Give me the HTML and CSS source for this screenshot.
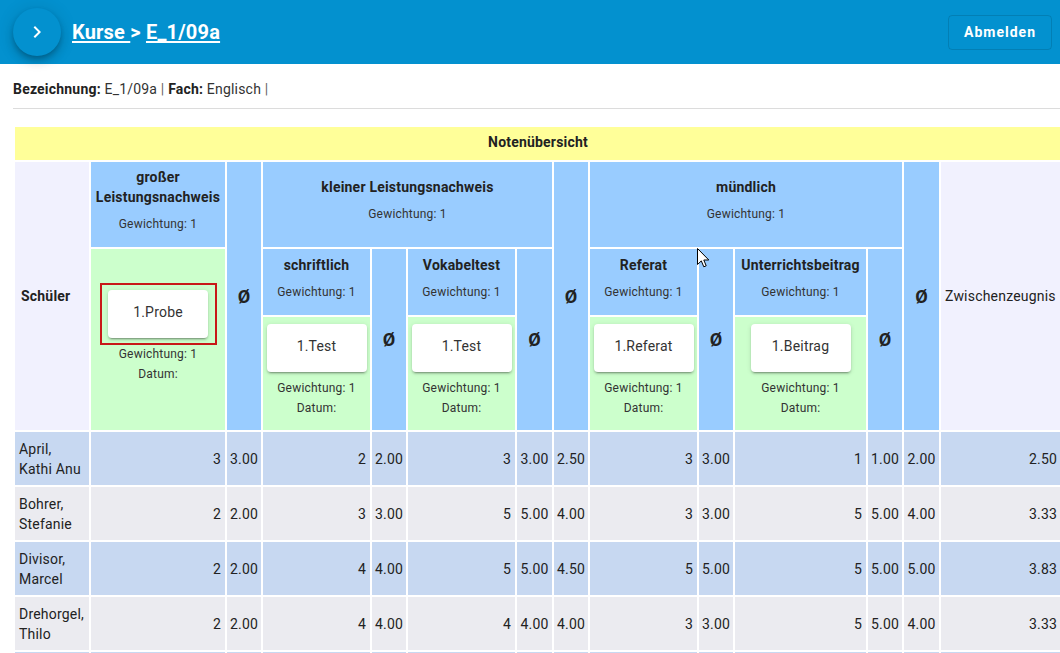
FILE: index.html
```html
<!DOCTYPE html>
<html lang="de">
<head>
<meta charset="utf-8">
<title>Kurse &gt; E_1/09a</title>
<link rel="stylesheet" href="styles.css">
</head>
<body>
<header class="topbar">
  <button class="fab" type="button" aria-label="Menü">
    <svg viewBox="0 0 24 24" width="24" height="24"><path d="M10 6L8.59 7.41 13.17 12l-4.58 4.59L10 18l6-6z" fill="#fff"/></svg>
  </button>
  <h1 class="crumbs"><a href="#" class="crumb">Kurse </a>&gt; <a href="#" class="crumb">E_1/09a</a></h1>
  <button class="logout" type="button">Abmelden</button>
</header>
<main class="content">
  <div class="info"><b>Bezeichnung:</b> E_1/09a <span class="sep">|</span> <b>Fach:</b> Englisch <span class="sep">|</span></div>
  <hr class="rule">
  <table class="grades">
    <colgroup>
      <col class="w-name"><col class="w-big"><col class="w-avg"><col class="w-sub"><col class="w-avg"><col class="w-sub"><col class="w-avg35"><col class="w-avg"><col class="w-sub"><col class="w-avg"><col class="w-wide"><col class="w-avg"><col class="w-avg35"><col class="w-final">
    </colgroup>
    <thead>
      <tr class="r-title"><th colspan="14" class="c-title">Notenübersicht</th></tr>
      <tr class="r-cat">
        <th rowspan="3" class="c-student">Schüler</th>
        <th class="c-cat"><div class="title">großer Leistungsnachweis</div><div class="weight">Gewichtung: 1</div></th>
        <th rowspan="3" class="c-avg">Ø</th>
        <th colspan="4" class="c-cat"><div class="title">kleiner Leistungsnachweis</div><div class="weight">Gewichtung: 1</div></th>
        <th rowspan="3" class="c-avg">Ø</th>
        <th colspan="4" class="c-cat"><div class="title">mündlich</div><div class="weight">Gewichtung: 1</div></th>
        <th rowspan="3" class="c-avg">Ø</th>
        <th rowspan="3" class="c-final">Zwischenzeugnis</th>
      </tr>
      <tr class="r-sub">
        <th rowspan="2" class="c-exam">
          <div class="card">1.Probe<span class="mark"></span></div>
          <div class="meta">Gewichtung: 1</div>
          <div class="meta">Datum:</div>
        </th>
        <th class="c-cat"><div class="title">schriftlich</div><div class="weight">Gewichtung: 1</div></th>
        <th rowspan="2" class="c-avg">Ø</th>
        <th class="c-cat"><div class="title">Vokabeltest</div><div class="weight">Gewichtung: 1</div></th>
        <th rowspan="2" class="c-avg">Ø</th>
        <th class="c-cat"><div class="title">Referat</div><div class="weight">Gewichtung: 1</div></th>
        <th rowspan="2" class="c-avg">Ø</th>
        <th class="c-cat"><div class="title">Unterrichtsbeitrag</div><div class="weight">Gewichtung: 1</div></th>
        <th rowspan="2" class="c-avg">Ø</th>
      </tr>
      <tr class="r-exam">
        <th class="c-exam"><div class="card">1.Test</div><div class="meta">Gewichtung: 1</div><div class="meta">Datum:</div></th>
        <th class="c-exam"><div class="card">1.Test</div><div class="meta">Gewichtung: 1</div><div class="meta">Datum:</div></th>
        <th class="c-exam"><div class="card">1.Referat</div><div class="meta">Gewichtung: 1</div><div class="meta">Datum:</div></th>
        <th class="c-exam"><div class="card">1.Beitrag</div><div class="meta">Gewichtung: 1</div><div class="meta">Datum:</div></th>
      </tr>
    </thead>
    <tbody>
      <tr class="row odd">
        <td class="name">April, Kathi Anu</td>
        <td class="num">3</td><td class="avg">3.00</td>
        <td class="num">2</td><td class="avg">2.00</td>
        <td class="num">3</td><td class="avg">3.00</td><td class="avg">2.50</td>
        <td class="num">3</td><td class="avg">3.00</td>
        <td class="num">1</td><td class="avg">1.00</td><td class="avg">2.00</td>
        <td class="num">2.50</td>
      </tr>
      <tr class="row even">
        <td class="name">Bohrer, Stefanie</td>
        <td class="num">2</td><td class="avg">2.00</td>
        <td class="num">3</td><td class="avg">3.00</td>
        <td class="num">5</td><td class="avg">5.00</td><td class="avg">4.00</td>
        <td class="num">3</td><td class="avg">3.00</td>
        <td class="num">5</td><td class="avg">5.00</td><td class="avg">4.00</td>
        <td class="num">3.33</td>
      </tr>
      <tr class="row odd">
        <td class="name">Divisor, Marcel</td>
        <td class="num">2</td><td class="avg">2.00</td>
        <td class="num">4</td><td class="avg">4.00</td>
        <td class="num">5</td><td class="avg">5.00</td><td class="avg">4.50</td>
        <td class="num">5</td><td class="avg">5.00</td>
        <td class="num">5</td><td class="avg">5.00</td><td class="avg">5.00</td>
        <td class="num">3.83</td>
      </tr>
      <tr class="row even">
        <td class="name">Drehorgel, Thilo</td>
        <td class="num">2</td><td class="avg">2.00</td>
        <td class="num">4</td><td class="avg">4.00</td>
        <td class="num">4</td><td class="avg">4.00</td><td class="avg">4.00</td>
        <td class="num">3</td><td class="avg">3.00</td>
        <td class="num">5</td><td class="avg">5.00</td><td class="avg">4.00</td>
        <td class="num">3.33</td>
      </tr>
      <tr class="row odd">
        <td class="name"></td>
        <td class="num"></td><td class="avg"></td>
        <td class="num"></td><td class="avg"></td>
        <td class="num"></td><td class="avg"></td><td class="avg"></td>
        <td class="num"></td><td class="avg"></td>
        <td class="num"></td><td class="avg"></td><td class="avg"></td>
        <td class="num"></td>
      </tr>
    </tbody>
  </table>
</main>
<svg class="cursor" width="13" height="21" viewBox="0 0 13 21" aria-hidden="true">
  <path d="M0.5 0.5 L0.5 16.5 L4.3 12.9 L6.8 18.8 L9.2 17.8 L6.8 12 L11.8 12 Z" fill="#fff" stroke="#000" stroke-width="1" stroke-linejoin="miter"/>
</svg>
</body>
</html>
```

FILE: styles.css
```css
html, body {
  margin: 0;
  padding: 0;
  overflow: hidden;
}
body {
  position: relative;
  width: 1060px;
  height: 653px;
  font-family: Roboto, "Liberation Sans", Arial, sans-serif;
  font-size: 14px;
  letter-spacing: 0.2px;
  color: #222;
  background: #fff;
}

/* top bar */
.topbar {
  height: 64px;
  background: #0391cf;
  display: flex;
  align-items: center;
  padding: 0 8px 0 13px;
  box-sizing: border-box;
}
.fab {
  width: 48px;
  height: 48px;
  border-radius: 50%;
  border: none;
  padding: 0;
  background: #0391cf;
  display: flex;
  align-items: center;
  justify-content: center;
  box-shadow: 0 3px 5px -1px rgba(0,0,0,.2), 0 6px 10px 0 rgba(0,0,0,.14), 0 1px 18px 0 rgba(0,0,0,.12);
  flex: none;
}
.crumbs {
  margin: 0 0 0 11px;
  font-size: 20px;
  font-weight: 700;
  color: #fff;
  line-height: 24px;
  flex: 1;
}
.crumb {
  color: #fff;
  text-decoration: underline;
  text-underline-offset: 2px;
}
.logout {
  width: 104px;
  height: 35px;
  border: 1px solid rgba(0,0,0,.12);
  border-radius: 4px;
  background: transparent;
  color: #fff;
  font-family: Roboto, "Liberation Sans", Arial, sans-serif;
  font-size: 14px;
  font-weight: 700;
  letter-spacing: 1px;
  padding: 0;
}

/* content */
.content {
  padding: 0 0 0 13px;
}
.info {
  padding-top: 15px;
  line-height: 20px;
  color: #333;
}
.info b {
  color: #222;
}
.sep {
  color: #666;
}
.rule {
  margin: 9px 0 0;
  border: none;
  border-top: 1px solid #dcdcdc;
  height: 0;
}

/* table */
.grades {
  margin-top: 16px;
  border-spacing: 2px;
  table-layout: fixed;
  width: 1050px;
}
.w-name { width: 74px; }
.w-big { width: 134px; }
.w-avg { width: 34px; }
.w-avg35 { width: 35px; }
.w-sub { width: 107px; }
.w-wide { width: 131px; }
.w-final { width: 120px; }

.grades th {
  padding: 0 2px;
  font-weight: 400;
}
.r-title { height: 33px; }
.r-cat { height: 85px; }
.r-sub { height: 66px; }
.r-exam { height: 113px; }

.c-title {
  background: #ffff99;
  font-weight: 700 !important;
  text-align: center;
  padding-bottom: 3px !important;
}
.c-student {
  background: #f1f1fe;
  font-weight: 700 !important;
  text-align: left;
  padding: 0 6px !important;
}
.c-final {
  background: #f1f1fe;
  text-align: left;
  padding: 0 4px !important;
}
.c-cat {
  background: #99ccff;
  text-align: center;
  vertical-align: middle;
}
.c-cat .title {
  font-weight: 700;
  line-height: 20px;
}
.c-cat .weight {
  font-size: 12px;
  line-height: 16px;
  margin: 9px 0 10px;
  color: #333;
}
.c-avg {
  background: #99ccff;
  font-size: 18px;
  font-weight: 700 !important;
  text-align: center;
}
.c-exam {
  background: #ccffcc;
  text-align: center;
  vertical-align: middle;
  padding: 0 0 12px !important;
}
.card {
  position: relative;
  width: 100px;
  height: 48px;
  box-sizing: border-box;
  padding-bottom: 3px;
  margin: 6px auto;
  background: #fff;
  border-radius: 4px;
  display: flex;
  align-items: center;
  justify-content: center;
  font-size: 14px;
  color: #333;
  box-shadow: 0 3px 1px -2px rgba(0,0,0,.2), 0 2px 2px 0 rgba(0,0,0,.14), 0 1px 5px 0 rgba(0,0,0,.12);
}
.mark {
  position: absolute;
  top: -7px;
  left: -8px;
  width: 117px;
  height: 62px;
  box-sizing: border-box;
  border: 2px solid #c81818;
}
.meta {
  font-size: 12px;
  line-height: 20px;
  color: #333;
}

.row { height: 53px; }
.row td {
  padding: 0 4px;
  line-height: 20px;
  vertical-align: middle;
}
.row.odd td { background: #c7d8f1; }
.row.even td { background: #ebebf0; }
.row .name { text-align: left; padding-right: 1px; }
.row .num { text-align: right; }
.row .avg { text-align: center; padding: 0; }

.cursor {
  position: absolute;
  left: 697px;
  top: 248px;
}
```
